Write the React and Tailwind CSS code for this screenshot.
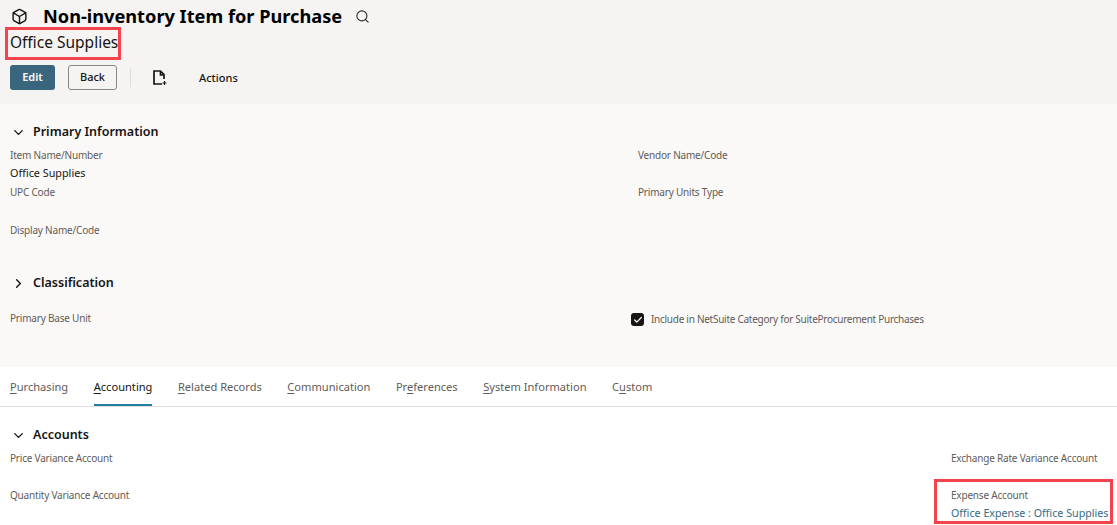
import React from "react";
import { ChevronDown, ChevronRight, Search, Box, Check } from "lucide-react";

const font = { fontFamily: '"Noto Sans", "Open Sans", sans-serif' };

function Field({ label, value, className = "" }) {
  return (
    <div className={`h-[37.5px] ${className}`}>
      <div className="text-[10px] tracking-[-0.2px] leading-[15px] text-[#5f5b57] whitespace-nowrap">{label}</div>
      {value ? <div className="text-[10.8px] leading-[20px] text-[#161513] whitespace-nowrap">{value}</div> : null}
    </div>
  );
}

function Section({ title, open = true }) {
  const Icon = open ? ChevronDown : ChevronRight;
  return (
    <div className="flex items-center h-[20px] pl-[10px]">
      <Icon size={15} strokeWidth={2.2} className="text-[#161513] ml-[1px] mr-[7px]" />
      <span className="text-[12.5px] font-semibold text-[#161513] whitespace-nowrap">{title}</span>
    </div>
  );
}

function Tab({ first, rest, pre = "", active }) {
  return (
    <div className={`h-[39px] pt-[12px] text-[11.1px] leading-[16px] whitespace-nowrap border-b-2 ${active ? "border-[#227e9e] text-[#161513]" : "border-transparent text-[#5f5b57]"}`}>
      {pre}<span className="underline underline-offset-2">{first}</span>{rest}
    </div>
  );
}

export default function App() {
  return (
    <div style={font} className="w-[1117px] h-[525px] overflow-hidden bg-white text-[#161513]">
      <header className="h-[104px] bg-[#f5f4f2] pl-[10px] pt-[4px]">
        <div className="flex items-center h-[24px]">
          <Box size={17} strokeWidth={2} className="ml-[1px] mr-[15px]" />
          <h1 className="text-[18.2px] leading-[24px] font-bold text-black whitespace-nowrap">Non-inventory Item for Purchase</h1>
          <Search size={15} strokeWidth={1.8} className="ml-[13px] text-[#312d2a]" />
        </div>
        <div className="mt-[-2px] h-[32px] flex items-center">
          <span className="relative text-[15.5px] leading-[22px] whitespace-nowrap">
            Office Supplies
            <span className="absolute -left-[5px] -top-[4px] -bottom-[7px] -right-[3px] border-[3px] border-[#f4434c]" />
          </span>
        </div>
        <div className="flex items-center mt-[7px] h-[25px]">
          <button className="w-[45px] h-[25px] rounded-[3px] bg-[#3a667d] text-white text-[11px] font-semibold">Edit</button>
          <button className="ml-[13px] w-[49px] h-[25px] rounded-[3px] border border-[#8a8580] text-[11px] font-medium text-[#161513]">Back</button>
          <div className="ml-[13px] w-px h-[19px] bg-[#dedcd9]" />
          <svg className="ml-[21px]" width="15" height="17" viewBox="0 0 15 17" fill="none" stroke="#161513" strokeWidth="1.7">
            <path d="M9 2H2v13h8M8.5 2l3.5 3.5V10M8.5 2v4h3.5" />
            <path d="M12.5 12v4M10.5 14h4" strokeWidth="1.2" />
          </svg>
          <span className="ml-[32px] text-[11px] font-medium whitespace-nowrap relative top-[1px]">Actions</span>
        </div>
      </header>

      <section className="h-[263px] bg-[#faf9f7] pt-[18px]">
        <Section title="Primary Information" />
        <div className="grid grid-cols-[628px_1fr] pl-[10px] mt-[5.5px]">
          <div>
            <Field label="Item Name/Number" value="Office Supplies" />
            <Field label="UPC Code" />
            <Field label="Display Name/Code" />
          </div>
          <div>
            <Field label="Vendor Name/Code" />
            <Field label="Primary Units Type" />
          </div>
        </div>
        <div className="mt-[13.5px]">
          <Section title="Classification" open={false} />
        </div>
        <div className="grid grid-cols-[621px_1fr] pl-[10px] mt-[17px]">
          <Field label="Primary Base Unit" />
          <div className="flex items-center h-[16px] mt-[1px]">
            <span className="w-[13px] h-[13px] rounded-[3px] bg-[#161513] flex items-center justify-center">
              <Check size={10} strokeWidth={3} className="text-white" />
            </span>
            <span className="ml-[7px] text-[10px] tracking-[-0.27px] text-[#5f5b57] whitespace-nowrap">Include in NetSuite Category for SuiteProcurement Purchases</span>
          </div>
        </div>
      </section>

      <nav className="h-[40px] border-b border-[#dfdedc] flex gap-[25.5px] pl-[10px]">
        <Tab first="P" rest="urchasing" />
        <Tab first="A" rest="ccounting" active />
        <Tab first="R" rest="elated Records" />
        <Tab first="C" rest="ommunication" />
        <Tab pre="Pr" first="e" rest="ferences" />
        <Tab first="S" rest="ystem Information" />
        <Tab pre="C" first="u" rest="stom" />
      </nav>

      <section className="pt-[18px]">
        <Section title="Accounts" />
        <div className="grid grid-cols-[941px_1fr] pl-[10px] mt-[5.5px]">
          <div>
            <Field label="Price Variance Account" />
            <Field label="Quantity Variance Account" />
          </div>
          <div>
            <Field label="Exchange Rate Variance Account" />
            <div className="relative">
              <div className="text-[10px] tracking-[-0.2px] leading-[15px] text-[#5f5b57] whitespace-nowrap">Expense Account</div>
              <div className="text-[10.7px] leading-[20px] text-[#366a85] whitespace-nowrap">Office Expense : Office Supplies</div>
              <span className="absolute -left-[17px] -top-[9px] -bottom-[1px] right-[4px] border-[3px] border-[#f4434c]" />
            </div>
          </div>
        </div>
      </section>
    </div>
  );
}
